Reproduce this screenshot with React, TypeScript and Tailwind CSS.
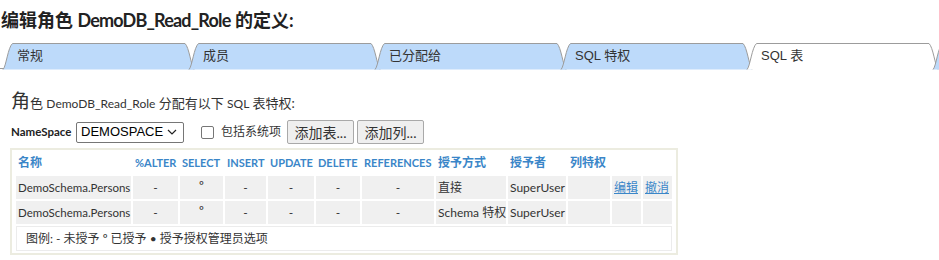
import React from 'react';

const TABS = ['常规', '成员', '已分配给', 'SQL 特权', 'SQL 表', ''];
const ACTIVE = 4;

const COLS = [
  { label: '名称', w: 115 },
  { label: '%ALTER', w: 45 },
  { label: 'SELECT', w: 43 },
  { label: 'INSERT', w: 41 },
  { label: 'UPDATE', w: 46 },
  { label: 'DELETE', w: 44 },
  { label: 'REFERENCES', w: 72 },
  { label: '授予方式', w: 70 },
  { label: '授予者', w: 58 },
  { label: '列特权', w: 42 },
  { label: '', w: 29 },
  { label: '', w: 29 },
];

const ROWS = [
  { name: 'DemoSchema.Persons', how: '直接', links: true },
  { name: 'DemoSchema.Persons', how: 'Schema 特权', links: false },
];

function Tab({ label, active }: { label: string; active: boolean }) {
  return (
    <div className="relative h-[26px] w-[186px] shrink-0">
      <svg className="absolute left-0 top-0 overflow-visible" width="196" height="27">
        <path
          d="M3 26.5 C6 24 8 4 12.5 0.5 L185 0.5 C189 4 191 22 194 26.5"
          fill={active ? '#ffffff' : '#bddafa'}
          stroke="#9c9c9c"
          strokeWidth="1"
        />
      </svg>
      <span className="relative block pl-[17px] pt-[5px] text-[13px] leading-[16px] text-[#333]">{label}</span>
    </div>
  );
}

export default function App() {
  return (
    <div className="h-[260px] w-[939px] overflow-hidden bg-white text-[#333] font-['Lato','Noto_Sans_CJK_SC',sans-serif]">
      <h1 className="pl-[1px] pt-[8px] text-[18px] font-bold leading-[24px] text-[#222]">
        编辑角色 <span className="tracking-[-0.8px]">DemoDB_Read_Role</span> 的定义:
      </h1>

      <div className="mt-[11px] flex h-[26px] border-b border-[#9c9c9c] font-['Liberation_Sans','Noto_Sans_CJK_SC',sans-serif]">
        {TABS.map((t, i) => (
          <Tab key={i} label={t} active={i === ACTIVE} />
        ))}
      </div>

      <p className="mt-[22px] pl-[11px] text-[13px] leading-[20px]">
        <span className="text-[19px]">角</span>色 <span className="text-[12px]">DemoDB_Read_Role</span> 分配有以下 <span className="text-[12px]">SQL</span> 表特权:
      </p>

      <div className="mt-[6px] flex h-[24px] items-center whitespace-nowrap pl-[11px]">
        <span className="w-[62px] shrink-0 text-[11.5px] font-bold text-[#222]">NameSpace</span>
        <div className="ml-[3px] flex h-[21px] w-[108px] shrink-0 items-center justify-between rounded-[2px] border border-[#767676] pl-[4px] pr-[6px] font-['Liberation_Sans',sans-serif] text-[13px] text-black">
          <span>DEMOSPACE</span>
          <svg width="10" height="6" viewBox="0 0 10 6" className="shrink-0">
            <path d="M1 1 L5 5 L9 1" fill="none" stroke="#222" strokeWidth="1.2" />
          </svg>
        </div>
        <span className="ml-[17px] h-[13px] w-[13px] shrink-0 rounded-[2px] border border-[#767676] bg-white" />
        <span className="ml-[7px] w-[60px] shrink-0 text-[12px]">包括系统项</span>
        <button className="ml-[6px] h-[24px] w-[67px] shrink-0 rounded-[2px] border border-[#a9a9a9] bg-[#efefef] text-[14px] text-[#333]">
          添加表...
        </button>
        <button className="ml-[3px] h-[24px] w-[67px] shrink-0 rounded-[2px] border border-[#a9a9a9] bg-[#efefef] text-[14px] text-[#333]">
          添加列...
        </button>
      </div>

      <div className="ml-[10px] mt-[4px] w-[668px] border-2 border-[#ecece0] px-[2px]">
        <table className="w-[660px] table-fixed border-separate border-spacing-[2px] whitespace-nowrap text-[12px]">
          <colgroup>
            {COLS.map((c, i) => (
              <col key={i} style={{ width: c.w }} />
            ))}
          </colgroup>
          <thead>
            <tr className="h-[22px]">
              {COLS.map((c, i) => (
                <th key={i} className="overflow-hidden bg-white px-[2px] text-left text-[11px] font-bold text-[#3a86c8]">
                  <span className={i === 0 || i > 6 ? 'text-[12px]' : ''}>{c.label}</span>
                </th>
              ))}
            </tr>
          </thead>
          <tbody>
            {ROWS.map((r, i) => (
              <tr key={i} className="h-[23px]">
                <td className="bg-[#f0f0f0] px-[2px] text-[11.5px]">{r.name}</td>
                <td className="bg-[#f0f0f0] text-center">-</td>
                <td className="bg-[#f0f0f0] pb-[4px] text-center">º</td>
                <td className="bg-[#f0f0f0] text-center">-</td>
                <td className="bg-[#f0f0f0] text-center">-</td>
                <td className="bg-[#f0f0f0] text-center">-</td>
                <td className="bg-[#f0f0f0] text-center">-</td>
                <td className="bg-[#f0f0f0] px-[2px]">{r.how}</td>
                <td className="bg-[#f0f0f0] px-[2px]">SuperUser</td>
                <td className="bg-[#f0f0f0]" />
                <td className="bg-[#f0f0f0] px-[2px]">
                  {r.links && <a className="text-[#3a86c8] underline">编辑</a>}
                </td>
                <td className="bg-[#f0f0f0] px-[2px]">
                  {r.links && <a className="text-[#3a86c8] underline">撤消</a>}
                </td>
              </tr>
            ))}
            <tr className="h-[25px]">
              <td colSpan={12} className="border border-[#ececec] pl-[9px] text-[12px]">
                图例: - 未授予 º 已授予 • 授予授权管理员选项
              </td>
            </tr>
          </tbody>
        </table>
      </div>
    </div>
  );
}
